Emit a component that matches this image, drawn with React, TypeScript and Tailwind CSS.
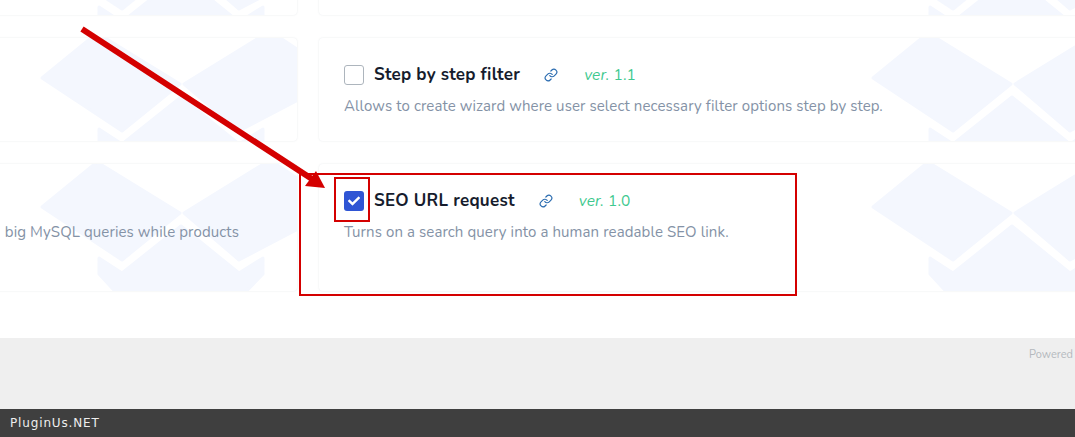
import { Link } from "lucide-react";
import { FaCheck } from "react-icons/fa";

// Pale diamonds behind each card, anchored to the card's right edge
function CardPattern({ top, height }: { top: number; height: number }) {
    return (
        <svg
            className="absolute right-0 top-0"
            width={340}
            height={height}
            viewBox={`-43 ${top} 340 ${height}`}
        >
            <g fill="#f4f7fe" stroke="#f4f7fe" strokeWidth={3} strokeLinejoin="round">
                <polygon points="42,78 97,33 180,84 122,131" />
                <polygon points="184,84 270,31 340,78 239,131" />
                <polygon points="99,129 122,144 181,97 239,144 263,129 263,145 239,170 122,170 99,145" />
            </g>
        </svg>
    );
}

function Card({
    height,
    patternTop,
    children,
}: {
    height: number;
    patternTop: number;
    children?: React.ReactNode;
}) {
    return (
        <div
            className="relative w-[809px] shrink-0 overflow-hidden rounded-[4px] bg-white shadow-[0_0_2px_rgba(60,72,88,0.12)]"
            style={{ height }}
        >
            <CardPattern top={patternTop} height={height} />
            <div className="relative">{children}</div>
        </div>
    );
}

function Extension({
    title,
    version,
    desc,
    checked,
}: {
    title: string;
    version: string;
    desc: string;
    checked?: boolean;
}) {
    return (
        <div className="pl-[25px] pt-[25px]">
            <div className="flex h-[24px] items-center">
                {checked ? (
                    <span className="flex h-[20px] w-[20px] items-center justify-center rounded-[3px] bg-[#2f55d4] text-white">
                        <FaCheck size={12} />
                    </span>
                ) : (
                    <span className="h-[20px] w-[20px] rounded-[3px] border border-[#adb5bd] bg-white" />
                )}
                <span className="ml-[10px] text-[17px] font-bold tracking-[0.25px] text-[#161c2d]">{title}</span>
                <Link size={14} strokeWidth={2} className="ml-[24px] text-[#2b6cb0]" />
                <span className="ml-[26px] text-[15.5px] tracking-[0.1px] text-[#3fc98f]">
                    <em>ver.</em> {version}
                </span>
            </div>
            <p className="mt-[7px] text-[15px] leading-[24px] tracking-[0.1px] text-[#8492a6]">{desc}</p>
        </div>
    );
}

export default function App() {
    return (
        <div className="relative h-[437px] w-[1075px] overflow-hidden bg-white font-['Nunito','Lato','Noto_Sans',sans-serif]">
            <main className="flex h-[338px] flex-col gap-[23px] overflow-hidden">
                <div className="-mt-[100px] -ml-[512px] flex gap-[22px]">
                    <Card height={115} patternTop={22} />
                    <Card height={115} patternTop={22} />
                </div>
                <div className="-ml-[512px] flex gap-[22px]">
                    <Card height={103} patternTop={38} />
                    <Card height={103} patternTop={38}>
                        <Extension
                            title="Step by step filter"
                            version="1.1"
                            desc="Allows to create wizard where user select necessary filter options step by step."
                        />
                    </Card>
                </div>
                <div className="-ml-[512px] flex gap-[22px]">
                    <Card height={127} patternTop={35}>
                        <p className="pr-[58px] pt-[56px] text-right text-[15px] leading-[24px] tracking-[0.1px] text-[#8492a6]">
                            big MySQL queries while products
                        </p>
                    </Card>
                    <Card height={127} patternTop={35}>
                        <Extension
                            checked
                            title="SEO URL request"
                            version="1.0"
                            desc="Turns on a search query into a human readable SEO link."
                        />
                    </Card>
                </div>
            </main>

            <footer className="flex h-[71px] justify-end overflow-hidden bg-[#efefef] pr-[2px] pt-[10px]">
                <span className="whitespace-nowrap text-[11px] leading-[14px] text-[#b4b8bd]">Powered</span>
            </footer>
            <div className="flex h-[28px] items-center bg-[#3f3f3f] pl-[10px] font-['DejaVu_Sans',sans-serif] text-[12px] tracking-[0.85px] text-[#eeeeee]">
                PluginUs.NET
            </div>

            {/* Red annotations drawn over the page */}
            <div className="absolute left-[299px] top-[173px] h-[123px] w-[498px] border-2 border-[#d40000]" />
            <div className="absolute left-[334px] top-[177px] h-[45px] w-[36px] border-2 border-[#d40000]" />
            <svg className="absolute left-0 top-0" width={1075} height={437}>
                <line x1={82} y1={29} x2={312} y2={179} stroke="#d40000" strokeWidth={6} />
                <polygon points="325,188 305,186 316,171" fill="#d40000" />
            </svg>
        </div>
    );
}
